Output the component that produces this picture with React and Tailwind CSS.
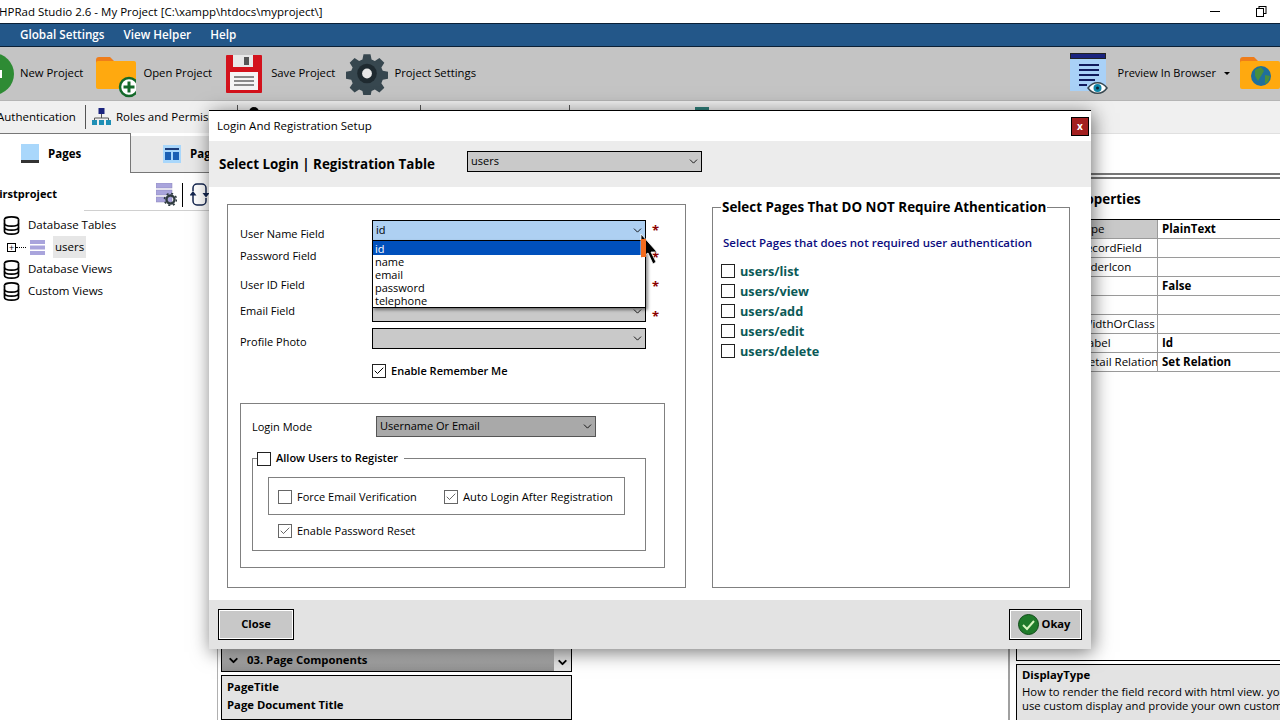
import { ChevronDown, Check } from "lucide-react"

const Select = ({ value, className = "bg-[#c9c9c9] border-black", width = "w-[274px]" }) => (
  <div className={`flex h-[21px] ${width} items-center justify-between border pl-[3px] pr-[1px] text-[11px] ${className}`}>
    <span>{value}</span>
    <ChevronDown size={13} strokeWidth={1.6} className="shrink-0" />
  </div>
)

const CheckBox = ({ checked, strong }) => (
  <span className={`flex h-[14px] w-[14px] shrink-0 items-center justify-center border bg-white ${strong ? "border-[#222]" : "border-[#666]"}`}>
    {checked && <Check size={12} strokeWidth={strong ? 2 : 1.2} />}
  </span>
)

const FieldRow = ({ label, labelClass = "", mt, starClass = "", star = true, value, selectClass }) => (
  <div className={`flex items-center ${mt}`}>
    <span className={`w-[132px] text-[11px] font-medium ${labelClass}`}>{label}</span>
    <Select value={value} className={selectClass} />
    {star && <span className={`ml-[6px] text-[13px] font-bold leading-none text-[#8b0000] ${starClass}`}>*</span>}
  </div>
)

const DbIcon = () => (
  <svg width="17" height="19" viewBox="0 0 17 19" fill="none" stroke="#000" strokeWidth="1.7">
    <ellipse cx="8.5" cy="3.5" rx="7" ry="2.6" fill="#fff" />
    <path d="M1.5 3.5v12c0 1.5 3 2.6 7 2.6s7-1.1 7-2.6v-12" fill="#fff" />
    <path d="M1.5 7.5c0 1.5 3 2.6 7 2.6s7-1.1 7-2.6M1.5 11.5c0 1.5 3 2.6 7 2.6s7-1.1 7-2.6" />
  </svg>
)

const TableIcon = () => (
  <svg width="17" height="17" viewBox="0 0 17 17">
    <rect x="1" y="1" width="15" height="4" fill="#a9a4dc" />
    <rect x="1" y="6.5" width="15" height="4" fill="#a9a4dc" />
    <rect x="1" y="12" width="15" height="4" fill="#a9a4dc" />
  </svg>
)

const TableGearIcon = () => (
  <svg width="21" height="23" viewBox="0 0 21 23">
    <rect x="0" y="0" width="16" height="5" fill="#a9a4dc" stroke="#8a85b8" strokeWidth="0.5" />
    <rect x="0" y="7" width="16" height="5" fill="#a9a4dc" stroke="#8a85b8" strokeWidth="0.5" />
    <rect x="0" y="14" width="16" height="5" fill="#a9a4dc" stroke="#8a85b8" strokeWidth="0.5" />
    <circle cx="14.5" cy="16.5" r="4" fill="none" stroke="#2f3b40" strokeWidth="2.4" />
    <circle cx="14.5" cy="16.5" r="6" fill="none" stroke="#2f3b40" strokeWidth="1.6" strokeDasharray="2 2.7" />
  </svg>
)

const RefreshIcon = () => (
  <svg width="19" height="25" viewBox="0 0 19 25" fill="none" stroke="#14264f" strokeWidth="1.5">
    <path d="M3 9V6a4 4 0 0 1 4-4h5a4 4 0 0 1 4 4v6" />
    <path d="M16 16v3a4 4 0 0 1-4 4H7a4 4 0 0 1-4-4v-6" />
    <path d="M12.5 11h7L16 15.5zM-0.500 13.500h7L3 9z" fill="#14264f" stroke="none" />
  </svg>
)

const Gear = () => (
  <svg width="42" height="43" viewBox="0 0 24 24">
    <path
      fill="#37474f"
      d="M10 1h4l.6 3 1.9.8 2.6-1.700 2.800 2.800-1.700 2.600.8 1.900 3 .6v4l-3 .6-.8 1.900 1.700 2.600-2.800 2.800-2.600-1.700-1.900.8-.6 3h-4l-.6-3-1.900-.8-2.600 1.700-2.800-2.800 1.700-2.600-.8-1.900-3-.6v-4l3-.6.8-1.900L2.100 5.900l2.800-2.800 2.600 1.700 1.900-.8z"
    />
    <circle cx="12" cy="12" r="5.600" fill="#1f2a30" />
    <circle cx="12" cy="12" r="2.800" fill="#e8e8e8" />
  </svg>
)

const Folder = ({ children }) => (
  <svg width="40" height="42" viewBox="0 0 40 42" className="mt-[7px]">
    <path d="M0 4a3 3 0 0 1 3-3h11l4 4v6H0z" fill="#ef7d1a" />
    <rect x="0" y="5" width="40" height="28" rx="2" fill="#ffa90f" />
    {children}
  </svg>
)

const ToolLabel = ({ children, className = "" }) => (
  <span className={`whitespace-nowrap ${className}`}>{children}</span>
)

const properties = [
  ["DisplayType", "PlainText"],
  ["DisplayRecordField", ""],
  ["TableHeaderIcon", ""],
  ["Visible", "False"],
  ["Filterable", ""],
  ["ColumnWidthOrClass", ""],
  ["ColumnLabel", "Id"],
  ["Master Detail Relation", "Set Relation"],
]

export default function App() {
  return (
    <div className="relative flex h-[720px] w-[1280px] flex-col overflow-hidden bg-white font-['Open_Sans','Noto_Sans',sans-serif] text-[11.5px] text-black">
      {/* title bar */}
      <div className="flex h-[23px] items-center justify-between bg-white">
        <span className="-ml-[1px]">HPRad Studio 2.6 - My Project [C:\xampp\htdocs\myproject\]</span>
        <div className="flex items-center">
          <span className="mr-[36px] h-[1px] w-[10px] bg-black" />
          <svg width="11" height="11" viewBox="0 0 11 11" fill="#fff" stroke="#000" className="mr-[13px]">
            <rect x="3" y="0.500" width="7" height="7" />
            <rect x="0.500" y="2.500" width="7" height="8" />
          </svg>
        </div>
      </div>

      {/* menu */}
      <div className="flex h-[24px] items-center gap-[19px] border-y border-[#0b2036] bg-[#235789] pl-[20px] text-[11.7px] font-semibold text-white">
        <span>Global Settings</span>
        <span>View Helper</span>
        <span>Help</span>
      </div>

      {/* toolbar */}
      <div className="flex h-[54px] items-center justify-between overflow-hidden border-b border-[#b5b5b5] bg-[#c4c4c4] text-[11.3px]">
        <div className="flex items-center">
          <svg width="14" height="42" viewBox="0 0 14 42" className="mr-[6px]">
            <circle cx="-7" cy="21" r="21" fill="#2e8b34" />
            <rect x="-6" y="17" width="8" height="8" fill="#fff" />
          </svg>
          <ToolLabel className="mr-[13px]">New Project</ToolLabel>
          <Folder>
            <circle cx="33" cy="31" r="9" fill="#fff" stroke="#14692a" strokeWidth="2.500" />
            <path d="M33 25.500v11M27.500 31h11" stroke="#14692a" strokeWidth="3" />
          </Folder>
          <ToolLabel className="ml-[7px] mr-[14px]">Open Project</ToolLabel>
          <svg width="36" height="38" viewBox="0 0 36 38">
            <rect width="36" height="38" rx="1" fill="#d3121c" />
            <rect x="7" y="0" width="20" height="12" fill="#e8e8e8" />
            <rect x="18" y="2" width="5" height="8" fill="#555" />
            <rect x="4" y="17" width="28" height="18" fill="#f5f5f5" />
            <path d="M8 22h20M8 26h20M8 30h20" stroke="#666" strokeWidth="1.500" />
          </svg>
          <ToolLabel className="ml-[9px] mr-[11px]">Save Project</ToolLabel>
          <Gear />
          <ToolLabel className="ml-[6px]">Project Settings</ToolLabel>
        </div>
        <div className="flex items-center">
          <svg width="38" height="42" viewBox="0 0 38 42">
            <rect x="0" y="0" width="36" height="38" fill="#a9d1f7" />
            <rect x="0.500" y="0.500" width="35" height="5" fill="#1a237e" stroke="#222" />
            <path d="M9 12h20M9 17h20M9 22h20M9 27h16M9 32h8" stroke="#111a5c" strokeWidth="2" />
            <path d="M18 35c5-7 14-7 19 0-5 7-14 7-19 0z" fill="#fff" stroke="#37474f" strokeWidth="1.500" />
            <circle cx="27.500" cy="35" r="4" fill="#0e86a8" />
            <circle cx="27.500" cy="35" r="1.500" fill="#123" />
          </svg>
          <ToolLabel className="ml-[10px] text-[11px]">Preview In Browser</ToolLabel>
          <span className="ml-[8px] mr-[10px] h-0 w-0 border-x-[3px] border-t-[3px] border-x-transparent border-t-black" />
          <Folder>
            <circle cx="21" cy="20" r="10" fill="#1f6f9c" />
            <path d="M15 14l6-3 3 4-3 5-3 5-3-5zM25 19l5 1-2 6-3 2z" fill="#4a8f3c" />
          </Folder>
        </div>
      </div>

      {/* sub toolbar */}
      <div className="flex h-[32px] items-center bg-[#f0f0f0]">
        <span className="w-[85px] whitespace-nowrap -indent-[3px]">Authentication</span>
        <span className="mr-[6px] h-[24px] w-[1px] bg-[#555]" />
        <svg width="19" height="18" viewBox="0 0 19 18" className="mr-[5px]">
          <rect x="6.500" y="0" width="6" height="6" fill="#1a237e" />
          <path d="M9.500 6v4M2.500 12v-2h14v2" stroke="#555" fill="none" />
          <rect x="0" y="12" width="5" height="5" fill="#1f8fb5" />
          <rect x="7" y="12" width="5" height="5" fill="#1f8fb5" />
          <rect x="14" y="12" width="5" height="5" fill="#1f8fb5" />
        </svg>
        <span className="w-[121px] whitespace-nowrap">Roles and Permissions</span>
        <span className="h-[24px] w-[1px] bg-[#555]" />
        <span className="ml-[11px] h-[20px] w-[10px] rounded-full bg-black" />
        <span className="ml-[161px] h-[24px] w-[1px] bg-[#555]" />
        <span className="ml-[148px] h-[24px] w-[1px] bg-[#555]" />
        <span className="ml-[125px] h-[20px] w-[14px] bg-[#2f7f7a]" />
      </div>

      {/* workspace */}
      <div className="flex min-h-0 flex-1">
        <div className="flex w-[209px] shrink-0 flex-col">
          <div className="flex h-[40px]">
            <div className="flex w-[131px] shrink-0 items-center border-r border-t border-[#777] pl-[21px] font-bold">
              <span className="mr-[9px] h-[19px] w-[18px] border-b-[3px] border-[#333] bg-[#a9d7fb]" />
              Pages
            </div>
            <div className="mt-[3px] flex flex-1 items-center whitespace-nowrap border-b border-[#777] bg-[#e8e8e8] pl-[32px] font-bold">
              <svg width="18" height="18" viewBox="0 0 18 18" className="mr-[9px] shrink-0">
                <rect width="18" height="18" fill="#a9d7fb" />
                <rect x="2" y="3" width="14" height="2" fill="#1a3a78" />
                <rect x="2" y="7" width="6" height="8" fill="#1a5fb4" />
                <rect x="10" y="7" width="6" height="8" fill="#1a5fb4" />
              </svg>
              Page Setup
            </div>
          </div>
          <div className="flex h-[37px] items-center justify-between pt-[6px]">
            <span className="-ml-[5px] text-[11px] font-bold">firstproject</span>
            <div className="flex items-center">
              <TableGearIcon />
              <span className="ml-[5px] mr-[7px] h-[24px] w-[1px] bg-black" />
              <RefreshIcon />
            </div>
          </div>
          <div className="ml-[84px] h-[1px] bg-[#d0d0d0]" />
          <div className="flex flex-col pl-[3px] pt-[3px]">
            <div className="flex h-[22px] items-center gap-[8px]"><DbIcon />Database Tables</div>
            <div className="flex h-[22px] items-center">
              <span className="ml-[4px] flex h-[9px] w-[9px] items-center justify-center border border-black text-[9px] leading-none">+</span>
              <span className="mr-[3px] w-[10px] border-t border-dotted border-black" />
              <TableIcon />
              <span className="ml-[7px] flex h-[22px] items-center bg-[#e6e6e6] px-[2px]">users</span>
            </div>
            <div className="flex h-[22px] items-center gap-[8px]"><DbIcon />Database Views</div>
            <div className="flex h-[22px] items-center gap-[8px]"><DbIcon />Custom Views</div>
          </div>
        </div>

        <div className="flex flex-1 flex-col">
          <div className="h-[40px] border-b border-[#777]" />
          <div className="ml-[8px] mt-auto w-[363px] border-l border-[#b0b0b0] pl-[3px] text-[11.3px] font-bold">
            <div className="flex h-[24px] w-[351px] items-stretch border border-black bg-[#e3e3e3]">
              <span className="flex flex-1 items-center gap-[7px] bg-gradient-to-b from-[#c9c9c9] to-[#8f8f8f] pl-[5px]">
                <ChevronDown size={13} strokeWidth={3.5} />03. Page Components
              </span>
              <span className="flex w-[17px] items-end justify-center pb-[2px]"><ChevronDown size={13} strokeWidth={3.5} /></span>
            </div>
            <div className="mt-[3px] h-[45px] w-[351px] border border-black bg-[#e3e3e3] pl-[5px] leading-[18px]">
              <div className="pt-[2px]">PageTitle</div>
              <div>Page Document Title</div>
            </div>
          </div>
        </div>

        <div className="flex w-[272px] shrink-0 flex-col border-l-[2px] border-[#a0a0a0] pl-[6px]">
          <div className="flex min-h-0 flex-1 flex-col border-b border-l border-black">
            <div className="h-[46px] border-b-[6px] border-t border-double border-[#777] border-t-[#e0e0e0]" />
            <div className="flex h-[40px] items-center pl-[54px] text-[13.4px] font-bold">Properties</div>
            <div className="border-t border-black">
              {properties.map(([name, val], i) => (
                <div key={name} className="flex h-[19px] border-b border-[#9a9a9a]">
                  <span className={`flex w-[141px] items-center overflow-hidden whitespace-nowrap border-r border-[#9a9a9a] pl-[23px] ${i === 0 ? "bg-[#c9c9c9]" : ""}`}>
                    {name}
                  </span>
                  <span className="pl-[4px] font-bold leading-[18px]">{val}</span>
                </div>
              ))}
            </div>
          </div>
          <div className="mt-[3px] h-[56px] overflow-hidden border-l border-t border-black bg-[#e3e3e3] pl-[5px] pt-[3px] text-[11.3px] leading-[14px]">
            <div className="mb-[3px] font-bold">DisplayType</div>
            <div className="whitespace-nowrap">How to render the field record with html view. you can</div>
            <div className="whitespace-nowrap">use custom display and provide your own custom</div>
          </div>
        </div>
      </div>

      {/* login dialog */}
      <div className="absolute left-[209px] top-[110px] flex h-[539px] w-[882px] flex-col border-t border-black bg-white shadow-[2px_3px_18px_rgba(0,0,0,0.55)]">
        <div className="flex h-[30px] shrink-0 items-center justify-between pl-[8px] pr-[2px]">
          <span>Login And Registration Setup</span>
          <span className="flex h-[19px] w-[18px] items-center justify-center border border-black bg-[#a32020] text-[10px] font-bold leading-none text-white">x</span>
        </div>
        <div className="flex h-[46px] shrink-0 items-center bg-[#ececec] pl-[10px]">
          <span className="mt-[1px] w-[248px] text-[13.4px] font-bold">Select Login | Registration Table</span>
          <div className="mb-[6px]">
            <Select value="users" width="w-[235px]" />
          </div>
        </div>

        <div className="flex min-h-0 flex-1 gap-[26px] pb-[12px] pl-[18px] pt-[10px]">
          {/* left box */}
          <div className="mt-[7px] w-[459px] border border-[#808080] pl-[12px] pr-[20px]">
            <div className="relative">
              <FieldRow label="User Name Field" labelClass="translate-y-[4px]" mt="mt-[15px]" value="id" selectClass="bg-[#aed0f2] border-black" />
              <FieldRow label="Password Field" labelClass="-translate-y-[1px]" mt="mt-[6px]" selectClass="bg-[#c9c9c9] border-black" />
              <FieldRow label="User ID Field" labelClass="translate-y-[1px]" starClass="translate-y-[2px]" mt="mt-[6px]" selectClass="bg-[#c9c9c9] border-black" />
              <FieldRow label="Email Field" starClass="translate-y-[5px]" mt="mt-[6px]" selectClass="bg-[#c9c9c9] border-black" />
              <FieldRow label="Profile Photo" labelClass="translate-y-[4px]" mt="mt-[6px]" star={false} selectClass="bg-[#c9c9c9] border-black" />

              {/* open dropdown */}
              <div className="absolute left-[132px] top-[20px] h-[68px] w-[274px] border border-black bg-white text-[11px] leading-[13px] shadow-[2px_2px_3px_rgba(0,0,0,0.45)]">
                <div className="flex h-[14px] items-center bg-[#0050bc] pl-[2px] text-white">id</div>
                <div className="pl-[2px]">name</div>
                <div className="pl-[2px]">email</div>
                <div className="pl-[2px]">password</div>
                <div className="pl-[2px]">telephone</div>
              </div>
              {/* mouse pointer */}
              <svg width="20" height="32" viewBox="0 0 20 32" className="absolute left-[400px] top-[13px]">
                <path d="M1 1l16 18h-6l5 10-3 2-5-11-7 5z" fill="#000" stroke="#fff" strokeWidth="0.800" />
              </svg>
              <span className="absolute left-[401px] top-[19px] h-[18px] w-[5px] bg-[#f26b1d]" />
            </div>

            <div className="ml-[132px] mt-[14px] flex items-center gap-[5px] text-[11px] font-semibold">
              <CheckBox checked strong />
              Enable Remember Me
            </div>

            <div className="mt-[23px] h-[165px] w-[425px] border border-[#808080] pl-[11px] pr-[18px]">
              <div className="mt-[12px] flex items-center">
                <span className="w-[124px] translate-y-[1px] text-[11px] font-medium">Login Mode</span>
                <Select value="Username Or Email" width="w-[220px]" className="border-[#555] bg-[#a9a9a9]" />
              </div>
              <fieldset className="mt-[15px] h-[99px] w-[394px] border border-[#808080]">
                <legend className="ml-[4px] flex h-[14px] items-center gap-[5px] pr-[6px] text-[11px] font-semibold">
                  <CheckBox strong />
                  Allow Users to Register
                </legend>
                <div className="ml-[15px] mt-[11px] flex h-[38px] w-[357px] items-center border border-[#808080] pl-[9px] pt-[3px] text-[11px]">
                  <span className="flex w-[166px] items-center gap-[5px]"><CheckBox />Force Email Verification</span>
                  <span className="flex items-center gap-[5px] text-[11.2px]"><CheckBox checked />Auto Login After Registration</span>
                </div>
                <div className="ml-[25px] mt-[8px] flex items-center gap-[5px] text-[11px]">
                  <CheckBox checked />Enable Password Reset
                </div>
              </fieldset>
            </div>
          </div>

          {/* right box */}
          <fieldset className="w-[358px] border border-[#808080]">
            <legend className="ml-[8px] h-[20px] px-[1px] text-[13.4px] font-bold leading-[20px]">Select Pages That DO NOT Require Athentication</legend>
            <div className="ml-[10px] mt-[17px] font-semibold text-[#0c0c7e]">Select Pages that does not required user authentication</div>
            <div className="ml-[8px] mt-[13px] flex flex-col gap-[6px] text-[12.7px] font-bold text-[#0b5a57]">
              {["users/list", "users/view", "users/add", "users/edit", "users/delete"].map((p) => (
                <div key={p} className="flex h-[14px] items-center gap-[5px]">
                  <CheckBox strong />
                  {p}
                </div>
              ))}
            </div>
          </fieldset>
        </div>

        <div className="flex h-[49px] shrink-0 items-center justify-between bg-[#e3e3e3] pl-[9px] pr-[9px] text-[11.2px] font-bold">
          <button className="flex h-[31px] w-[76px] items-center justify-center border border-black bg-[#c8c8c8] shadow-[inset_0_0_0_1px_#fff]">Close</button>
          <button className="flex h-[31px] w-[73px] items-center justify-center gap-[3px] border border-black bg-[#c8c8c8] pr-[3px] shadow-[inset_0_0_0_1px_#fff]">
            <svg width="21" height="21" viewBox="0 0 21 21">
              <circle cx="10.500" cy="10.500" r="10" fill="#1f7a2a" stroke="#0f4a18" />
              <path d="M5 11l4 4 7-8" fill="none" stroke="#d8f5c0" strokeWidth="2" />
            </svg>
            Okay
          </button>
        </div>
      </div>
    </div>
  )
}
